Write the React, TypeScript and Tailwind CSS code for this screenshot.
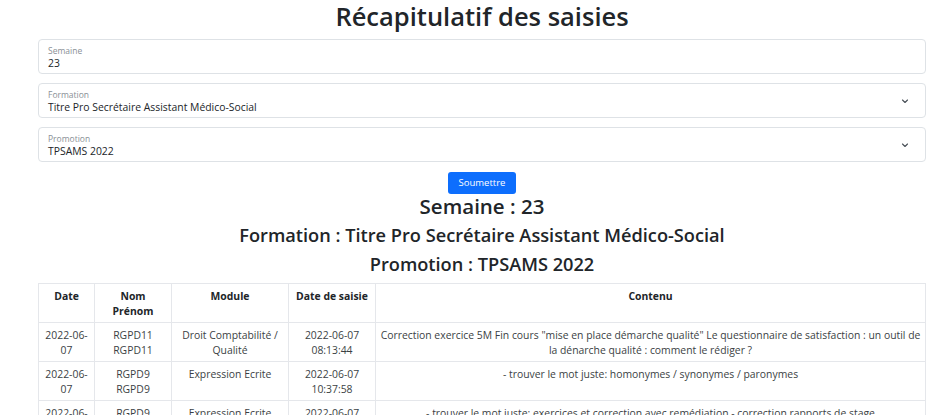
const rows = [
  {
    date: "2022-06-07",
    nom: "RGPD11 RGPD11",
    module: "Droit Comptabilité / Qualité",
    saisie: ["2022-06-07", "08:13:44"],
    contenu:
      'Correction exercice 5M Fin cours "mise en place démarche qualité" Le questionnaire de satisfaction : un outil de la dénarche qualité : comment le rédiger ?',
  },
  {
    date: "2022-06-07",
    nom: "RGPD9 RGPD9",
    module: "Expression Ecrite",
    saisie: ["2022-06-07", "10:37:58"],
    contenu: "- trouver le mot juste: homonymes / synonymes / paronymes",
  },
  {
    date: "2022-06-07",
    nom: "RGPD9 RGPD9",
    module: "Expression Ecrite",
    saisie: ["2022-06-07", "14:02:11"],
    contenu:
      "- trouver le mot juste: exercices et correction avec remédiation - correction rapports de stage",
  },
];

function Chevron() {
  return (
    <svg width="8" height="8" viewBox="0 0 16 16" className="shrink-0 mr-[6px]">
      <path
        d="M3 6l5 5 5-5"
        fill="none"
        stroke="#495057"
        strokeWidth="2.2"
        strokeLinecap="round"
        strokeLinejoin="round"
      />
    </svg>
  );
}

function Field({ label, value, select }: { label: string; value: string; select?: boolean }) {
  return (
    <div className="h-[35px] border border-[#dee2e6] rounded-[4px] pl-[9px] pr-[10px] flex items-center bg-white">
      <div className="flex-1 pt-[2px]">
        <div className="text-[8.5px] leading-[11px] text-[#8a9096]">{label}</div>
        <div className="text-[10.4px] leading-[14px] text-[#212529]">{value}</div>
      </div>
      {select && <Chevron />}
    </div>
  );
}

const cell = "border border-[#e5e7eb] align-top text-center pt-[5px] pb-[4px]";

export default function App() {
  return (
    <main
      className="w-[946px] h-[415px] overflow-hidden bg-white text-[#212529]"
      style={{ fontFamily: '"Open Sans", "Noto Sans", sans-serif' }}
    >
      <div className="w-[888px] ml-[38px]">
        <h1 className="text-center text-[25.5px] leading-[30px] font-semibold pt-[1px] mb-[8px]">
          Récapitulatif des saisies
        </h1>

        <div className="flex flex-col gap-[9px]">
          <Field label="Semaine" value="23" />
          <Field label="Formation" value="Titre Pro Secrétaire Assistant Médico-Social" select />
          <Field label="Promotion" value="TPSAMS 2022" select />
        </div>

        <div className="flex flex-col items-center">
          <button className="mt-[10px] bg-[#0d6efd] text-white text-[9.5px] leading-[12px] px-[11px] h-[22px] rounded-[3px]">
            Soumettre
          </button>
          <h2 className="text-[20.5px] leading-[26px] font-semibold -mt-[1px]">Semaine : 23</h2>
          <h3 className="text-[18.2px] leading-[22px] font-semibold mt-[5px]">
            Formation : Titre Pro Secrétaire Assistant Médico-Social
          </h3>
          <h3 className="text-[18.2px] leading-[22px] font-semibold mt-[7px]">
            Promotion : TPSAMS 2022
          </h3>
        </div>

        <table className="w-[888px] table-fixed border-collapse mt-[8px] text-[10.4px] leading-[14.5px]">
          <colgroup>
            <col className="w-[56px]" />
            <col className="w-[77px]" />
            <col className="w-[117px]" />
            <col className="w-[87px]" />
            <col />
          </colgroup>
          <thead>
            <tr className="h-[38px]">
              {["Date", "Nom Prénom", "Module", "Date de saisie", "Contenu"].map((h) => (
                <th key={h} className={`${cell} font-bold px-[4px]`}>
                  {h}
                </th>
              ))}
            </tr>
          </thead>
          <tbody>
            {rows.map((r, i) => (
              <tr key={i} className="h-[39px] text-[#3b3f44]">
                <td className={`${cell} px-[6px] break-all`}>{r.date}</td>
                <td className={`${cell} px-[8px]`}>{r.nom}</td>
                <td className={`${cell} px-[6px]`}>{r.module}</td>
                <td className={`${cell} px-[4px]`}>
                  {r.saisie[0]}
                  <br />
                  {r.saisie[1]}
                </td>
                <td className={`${cell} px-[2px]`}>{r.contenu}</td>
              </tr>
            ))}
          </tbody>
        </table>
      </div>
    </main>
  );
}
